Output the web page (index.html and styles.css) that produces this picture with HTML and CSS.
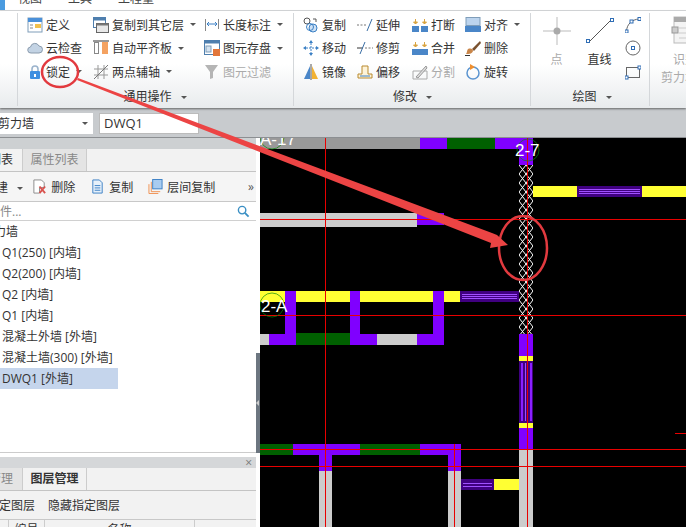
FILE: index.html
```html
<!DOCTYPE html>
<html lang="zh-CN">
<head>
    <meta charset="UTF-8">
    <meta name="viewport" content="width=device-width, initial-scale=1.0">
    <title>剪力墙</title>
    <link rel="stylesheet" href="styles.css">
</head>
<body>

    <!-- Menu tabs, cut off at the top -->
    <div class="menu">
        <span class="menu-active"></span>
        <span class="menu-item">视图</span>
        <span class="menu-item">工具</span>
        <span class="menu-item">工程量</span>
    </div>

    <div class="ribbon">
        <div class="group group-cut">
            <div class="group-body"></div>
        </div>

        <div class="group group-common">
            <div class="group-body">
                <div class="col col-a">
                    <div class="item">
                        <svg class="ico" viewBox="0 0 16 16"><rect x="1" y="1" width="14" height="14" fill="#fff" stroke="#7f9db9"/><rect x="1" y="1" width="14" height="4" fill="#4a90d9"/><rect x="8" y="7" width="6" height="4" fill="#f2c14e"/><path d="M3 8h3M3 11h3" stroke="#888"/></svg>
                        <span>定义</span>
                    </div>
                    <div class="item">
                        <svg class="ico" viewBox="0 0 16 16"><path d="M4 13a3 3 0 0 1-.5-6A4.500 4.500 0 0 1 12 6a3.500 3.500 0 0 1 0 7z" fill="#c3d3e4" stroke="#8a9bad"/></svg>
                        <span>云检查</span>
                    </div>
                    <div class="item">
                        <svg class="ico" viewBox="0 0 16 16"><path d="M5 8V5a3 3 0 0 1 6 0v3" fill="none" stroke="#9bb3cc" stroke-width="1.600"/><rect x="3" y="7" width="10" height="8" rx="1" fill="#3f8fe0"/><rect x="7" y="10" width="2" height="3" fill="#fff"/></svg>
                        <span>锁定</span>
                        <i class="caret"></i>
                    </div>
                </div>
                <div class="col col-b">
                    <div class="item">
                        <svg class="ico" viewBox="0 0 16 16"><rect x="0.500" y="0.500" width="12" height="10" fill="#fff" stroke="#4f7fae"/><rect x="0.500" y="0.500" width="12" height="3" fill="#4f7fae"/><rect x="3.500" y="6.500" width="12" height="9" fill="#e8e8e8" stroke="#666"/><rect x="3.500" y="6.500" width="12" height="2" fill="#777"/></svg>
                        <span>复制到其它层</span>
                        <i class="caret"></i>
                    </div>
                    <div class="item">
                        <svg class="ico" viewBox="0 0 16 16"><path d="M0 1h16" stroke="#333"/><rect x="1.500" y="2.500" width="4" height="11" fill="#fff" stroke="#888"/><rect x="9" y="2" width="6" height="12" fill="#f4a261"/></svg>
                        <span>自动平齐板</span>
                        <i class="caret"></i>
                    </div>
                    <div class="item">
                        <svg class="ico" viewBox="0 0 16 16"><path d="M5 1v14M11 1v14M1 5h14M1 11h14" stroke="#999"/><path d="M1 15L15 1" stroke="#777"/></svg>
                        <span>两点辅轴</span>
                        <i class="caret"></i>
                    </div>
                </div>
                <div class="col">
                    <div class="item">
                        <svg class="ico" viewBox="0 0 16 16"><path d="M1.500 2v12M14.500 2v10" stroke="#888"/><path d="M3 7h10M3 7l2-2M3 7l2 2M13 7l-2-2M13 7l-2 2" stroke="#3a7fc4" fill="none"/></svg>
                        <span>长度标注</span>
                        <i class="caret"></i>
                    </div>
                    <div class="item">
                        <svg class="ico" viewBox="0 0 16 16"><rect x="0.500" y="0.500" width="15" height="14" fill="#fff" stroke="#4f7fae"/><rect x="0.500" y="0.500" width="15" height="3" fill="#4f7fae"/><rect x="2" y="6" width="5" height="6" fill="#d5e3f0" stroke="#7f9db9"/><rect x="9" y="9" width="7" height="7" fill="#e2763a"/></svg>
                        <span>图元存盘</span>
                        <i class="caret"></i>
                    </div>
                    <div class="item item-off">
                        <svg class="ico" viewBox="0 0 16 16"><path d="M1 1h13L9 8v6l-3 1V8z" fill="#b5b5b5"/></svg>
                        <span>图元过滤</span>
                    </div>
                </div>
            </div>
            <div class="group-label">通用操作 <i class="caret"></i></div>
        </div>

        <div class="group group-edit">
            <div class="group-body">
                <div class="col col-c">
                    <div class="item">
                        <svg class="ico" viewBox="0 0 16 16"><circle cx="4" cy="4" r="3" fill="#fff" stroke="#555"/><circle cx="10" cy="11" r="4" fill="#cfe2f5" stroke="#3a7fc4"/><circle cx="7" cy="10" r="3.500" fill="none" stroke="#3a7fc4"/><path d="M10 2h3v3" fill="none" stroke="#555"/></svg>
                        <span>复制</span>
                    </div>
                    <div class="item">
                        <svg class="ico" viewBox="0 0 16 16"><path d="M8 0l2 3H6zM8 16l-2-3h4zM0 8l3-2v4zM16 8l-3 2V6z" fill="#3a7fc4"/><path d="M8 3v10M3 8h10" stroke="#3a7fc4" stroke-dasharray="2 1"/></svg>
                        <span>移动</span>
                    </div>
                    <div class="item">
                        <svg class="ico" viewBox="0 0 16 16"><path d="M7 2v13H1z" fill="#4a86c8"/><path d="M8 0v16" stroke="#555"/><path d="M9 2v13h6z" fill="#f2b233"/></svg>
                        <span>镜像</span>
                    </div>
                </div>
                <div class="col col-d">
                    <div class="item">
                        <svg class="ico" viewBox="0 0 16 16"><path d="M0 8h9" stroke="#777" stroke-dasharray="2 1.500"/><path d="M10 14L15 2" stroke="#3a6ea5"/></svg>
                        <span>延伸</span>
                    </div>
                    <div class="item">
                        <svg class="ico" viewBox="0 0 16 16"><path d="M0 8h6" stroke="#333"/><path d="M8 8h8" stroke="#777" stroke-dasharray="2 1.500"/><path d="M3 14L8 2" stroke="#3a6ea5"/></svg>
                        <span>修剪</span>
                    </div>
                    <div class="item">
                        <svg class="ico" viewBox="0 0 16 16"><path d="M1 14v-4h4V2h6v8h4v4z" fill="#fdf3d8" stroke="#b98a2f"/><path d="M3 12h10" stroke="#3a7fc4"/></svg>
                        <span>偏移</span>
                    </div>
                </div>
                <div class="col col-e">
                    <div class="item">
                        <svg class="ico" viewBox="0 0 16 16"><rect x="0" y="9" width="7" height="6" fill="#4a86c8"/><rect x="9" y="9" width="7" height="6" fill="#4a86c8"/><path d="M3.500 2v5M1.500 5h4l-2 2zM12.500 2v5M10.500 5h4l-2 2z" fill="#d9a441" stroke="#d9a441"/></svg>
                        <span>打断</span>
                    </div>
                    <div class="item">
                        <svg class="ico" viewBox="0 0 16 16"><rect x="0" y="9" width="16" height="6" fill="#4a86c8"/><path d="M3.500 2v5M1.500 5h4l-2 2zM12.500 2v5M10.500 5h4l-2 2z" fill="#d9a441" stroke="#d9a441"/></svg>
                        <span>合并</span>
                    </div>
                    <div class="item item-off">
                        <svg class="ico" viewBox="0 0 16 16"><path d="M1 7h14v8H1z" fill="none" stroke="#aaa"/><path d="M4 13L14 2l1 2L6 14z" fill="#ddd" stroke="#999"/></svg>
                        <span>分割</span>
                    </div>
                </div>
                <div class="col">
                    <div class="item">
                        <svg class="ico" viewBox="0 0 16 16"><rect x="1" y="0.500" width="14" height="8" fill="#bcd4ee" stroke="#7f9db9"/><rect x="0" y="9" width="16" height="6" fill="#4a86c8"/></svg>
                        <span>对齐</span>
                        <i class="caret"></i>
                    </div>
                    <div class="item">
                        <svg class="ico" viewBox="0 0 16 16"><path d="M15 1L7 9l2 2 7-8z" fill="#7a5230"/><path d="M3 9c3-1 5 0 5 2-1 3-4 3-7 3 1-1 1-4 2-5z" fill="#c9864a"/><path d="M0 15.500h5" stroke="#333"/></svg>
                        <span>删除</span>
                    </div>
                    <div class="item">
                        <svg class="ico" viewBox="0 0 16 16"><circle cx="8" cy="9" r="6" fill="none" stroke="#5a94d0" stroke-width="1.500"/><path d="M5 0l5 3-5 3z" fill="#ef8f2f"/></svg>
                        <span>旋转</span>
                    </div>
                </div>
            </div>
            <div class="group-label">修改 <i class="caret"></i></div>
        </div>

        <div class="group group-draw">
            <div class="group-body">
                <div class="big big-off">
                    <svg class="big-ico" viewBox="0 0 30 30"><path d="M15 1v28M1 15h28" stroke="#bbb"/><circle cx="15" cy="15" r="3.500" fill="#aaa"/></svg>
                    <span>点</span>
                </div>
                <div class="big">
                    <svg class="big-ico" viewBox="0 0 30 30"><path d="M4 26L26 4" stroke="#555"/><rect x="1.500" y="23.500" width="3" height="3" fill="#fff" stroke="#2f6db5"/><rect x="25.500" y="2.500" width="3" height="3" fill="#fff" stroke="#2f6db5"/></svg>
                    <span>直线</span>
                </div>
                <div class="col">
                    <div class="item">
                        <svg class="ico" viewBox="0 0 16 16"><path d="M1.500 14C2 7 7 2.500 14 2" fill="none" stroke="#666"/><rect x="0" y="13" width="3" height="3" fill="#fff" stroke="#2f6db5"/><rect x="5" y="3" width="3" height="3" fill="#fff" stroke="#2f6db5"/><rect x="13" y="0.500" width="3" height="3" fill="#fff" stroke="#2f6db5"/></svg>
                    </div>
                    <div class="item">
                        <svg class="ico" viewBox="0 0 16 16"><circle cx="8" cy="8" r="7" fill="none" stroke="#666"/><rect x="6.500" y="6.500" width="3" height="3" fill="#fff" stroke="#2f6db5"/></svg>
                    </div>
                    <div class="item">
                        <svg class="ico" viewBox="0 0 16 16"><rect x="1.500" y="3.500" width="13" height="10" fill="none" stroke="#666"/><rect x="0" y="12" width="3" height="3" fill="#fff" stroke="#2f6db5"/><rect x="13" y="2" width="3" height="3" fill="#fff" stroke="#2f6db5"/></svg>
                    </div>
                </div>
            </div>
            <div class="group-label">绘图 <i class="caret"></i></div>
        </div>

        <div class="group group-id">
            <div class="group-body">
                <div class="big big-off">
                    <svg class="big-ico" viewBox="0 0 30 30"><rect x="4" y="1" width="26" height="26" fill="#f4f4f4" stroke="#bbb"/><rect x="4" y="1" width="26" height="5" fill="#aaa"/><rect x="2" y="11" width="6" height="6" fill="#ccc" stroke="#999"/><path d="M9 12h20M9 17h20M9 22h20" stroke="#ccc"/></svg>
                    <span>识别</span>
                    <span class="big-second">剪力墙</span>
                </div>
            </div>
        </div>
    </div>

    <div class="selectors">
        <div class="select"><span class="select-text">剪力墙</span><i class="caret"></i></div>
        <div class="input">DWQ1</div>
    </div>

    <div class="main">
        <div class="side">
            <div class="side-strip"></div>
            <div class="tabs">
                <div class="tab tab-on tab-cut">列表</div>
                <div class="tab">属性列表</div>
            </div>
            <div class="tools">
                <span class="tool tool-new">新建 <i class="caret"></i></span>
                <span class="tool">
                    <svg class="ico" viewBox="0 0 16 16"><path d="M2 1h8l3 3v5H8v6H2z" fill="#fff" stroke="#8a8a8a"/><path d="M8 8l6 7M14 8l-6 7" stroke="#d9534f" stroke-width="2"/></svg>
                    删除
                </span>
                <span class="tool">
                    <svg class="ico" viewBox="0 0 16 16"><path d="M3 1h7l3 3v11H3z" fill="#e6f0fa" stroke="#3a7fc4"/><path d="M5 7h6M5 9.500h6M5 12h6" stroke="#3a7fc4"/></svg>
                    复制
                </span>
                <span class="tool">
                    <svg class="ico" viewBox="0 0 16 16"><rect x="5" y="0.500" width="10" height="10" fill="#a9ccf0" stroke="#3a7fc4"/><path d="M3.500 3v10.500H13M1 5.500v10h10" fill="none" stroke="#ef8f4f"/></svg>
                    层间复制
                </span>
                <span class="tools-more">»</span>
            </div>
            <div class="search">
                <span class="search-text">构件...</span>
                <svg class="search-ico" viewBox="0 0 14 14"><circle cx="5.500" cy="5.500" r="4" fill="none" stroke="#3a8fc4" stroke-width="1.500"/><path d="M8.500 8.500l4 4" stroke="#3a8fc4" stroke-width="2"/></svg>
            </div>
            <ul class="tree">
                <li class="tree-root">剪力墙</li>
                <li>Q1(250) [内墙]</li>
                <li>Q2(200) [内墙]</li>
                <li>Q2 [内墙]</li>
                <li>Q1 [内墙]</li>
                <li>混凝土外墙 [外墙]</li>
                <li>混凝土墙(300) [外墙]</li>
                <li class="tree-on">DWQ1 [外墙]</li>
            </ul>

            <div class="layer">
                <div class="layer-head">×</div>
                <div class="tabs layer-tabs">
                    <div class="tab tab-cut">管理</div>
                    <div class="tab tab-on tab-bold">图层管理</div>
                </div>
                <div class="layer-tools">
                    <span class="layer-show">显示指定图层</span>
                    <span>隐藏指定图层</span>
                </div>
                <div class="layer-table">
                    <span class="cell cell-a"></span>
                    <span class="cell cell-b">编号</span>
                    <span class="cell cell-c">名称</span>
                </div>
            </div>
        </div>

        <div class="splitter"><span class="splitter-bar"><i></i></span></div>

        <svg class="cad" viewBox="260 138 426 389" shape-rendering="crispEdges">
            <defs>
                <pattern id="zig" x="519" y="165" width="7" height="9" patternUnits="userSpaceOnUse">
                    <path d="M0 0L7 9M7 0L0 9" stroke="#fff" fill="none" shape-rendering="auto"/>
                </pattern>
            </defs>

            <!-- top wall -->
            <rect class="c-grey2" x="260" y="138" width="160" height="11"/>
            <rect class="c-purple" x="420" y="138" width="27" height="11"/>
            <rect class="c-green" x="447" y="138" width="48" height="11"/>
            <rect class="c-purple" x="495" y="138" width="38" height="11"/>
            <rect class="c-purple" x="519" y="149" width="14" height="16"/>

            <!-- zigzag column -->
            <rect fill="url(#zig)" x="519" y="165" width="14" height="169"/>

            <!-- right wall -->
            <rect class="c-yellow" x="533" y="186" width="153" height="11"/>
            <rect class="c-deep" x="577" y="186" width="65" height="11"/>
            <path class="hatch" d="M579 189.500H640M579 191.500H640M579 193.500H640"/>

            <!-- grey wall -->
            <rect class="c-grey" x="260" y="213" width="157" height="14"/>
            <rect class="c-purple" x="417" y="213" width="27" height="12"/>

            <!-- middle wall -->
            <rect class="c-yellow" x="260" y="291" width="200" height="11"/>
            <rect class="c-deep" x="460" y="291" width="59" height="11"/>
            <path class="hatch" d="M462 294.500H517M462 296.500H517M462 298.500H517"/>
            <rect class="c-purple" x="285" y="291" width="11" height="43"/>
            <rect class="c-purple" x="350" y="291" width="10" height="43"/>
            <rect class="c-purple" x="433" y="291" width="11" height="43"/>
            <rect class="c-grey" x="260" y="334" width="9" height="11"/>
            <rect class="c-purple" x="269" y="334" width="27" height="11"/>
            <rect class="c-green" x="296" y="333" width="54" height="12"/>
            <rect class="c-purple" x="350" y="334" width="27" height="11"/>
            <rect class="c-grey" x="377" y="334" width="40" height="11"/>
            <rect class="c-purple" x="417" y="334" width="27" height="11"/>

            <!-- column below zigzag -->
            <rect class="c-purple" x="519" y="334" width="14" height="22"/>
            <rect class="c-yellow" x="519" y="356" width="14" height="5"/>
            <rect class="c-deep" x="519" y="361" width="14" height="62"/>
            <path class="hatch-wide" d="M522 363V421M531 363V421"/>
            <path class="hatch" d="M525.500 363V421"/>
            <rect class="c-yellow" x="519" y="423" width="14" height="5"/>
            <rect class="c-purple" x="519" y="428" width="14" height="21"/>
            <rect class="c-grey" x="519" y="449" width="14" height="78"/>

            <!-- bottom wall -->
            <rect class="c-green" x="260" y="444" width="33" height="11"/>
            <rect class="c-purple" x="293" y="444" width="67" height="11"/>
            <rect class="c-green" x="360" y="444" width="60" height="11"/>
            <rect class="c-purple" x="420" y="444" width="41" height="11"/>
            <rect class="c-purple" x="319" y="455" width="13" height="16"/>
            <rect class="c-grey" x="319" y="471" width="13" height="56"/>
            <rect class="c-purple" x="448" y="455" width="13" height="16"/>
            <rect class="c-grey" x="448" y="471" width="13" height="56"/>
            <rect class="c-deep" x="461" y="479" width="33" height="11"/>
            <path class="hatch" d="M463 483.500H492M463 486.500H492"/>
            <rect class="c-yellow" x="494" y="479" width="25" height="11"/>

            <!-- axis lines -->
            <path class="axis" d="M325.500 138V527M527.500 138V527M454.500 444V527M260 219.500H686M260 315.500H686M260 449.500H686M260 466.500H686M675 433.500H686"/>

            <!-- axis labels -->
            <g shape-rendering="auto">
                <circle class="bubble" cx="272" cy="305" r="12"/>
                <circle class="bubble" cx="272" cy="137" r="12"/>
                <circle class="bubble" cx="528" cy="150" r="11"/>
                <text class="axis-text" x="260" y="145">A-17</text>
                <text class="axis-text" x="515" y="156">2-7</text>
                <text class="axis-text" x="261" y="312">2-A</text>
            </g>
        </svg>
    </div>

    <!-- Red marks drawn over the screenshot -->
    <svg class="marks" viewBox="0 0 686 527">
        <ellipse class="mark" cx="60" cy="72" rx="18" ry="15"/>
        <ellipse class="mark" cx="523" cy="248" rx="24" ry="32"/>
        <path class="mark-arrow" d="M78 78L492 233L497 235L508 245L490 248L491 243L77 80z"/>
    </svg>

</body>
</html>
```

FILE: styles.css
```css
html, body {
    margin: 0;
    height: 100%;
}

body {
    width: 686px;
    height: 527px;
    overflow: hidden;
    position: relative;
    display: flex;
    flex-direction: column;
    font-family: "Open Sans", "Noto Sans CJK SC", sans-serif;
    font-size: 12px;
    color: #333;
    background: #fff;
}

/* Menu tabs */
.menu {
    height: 10px;
    flex: none;
    display: flex;
    overflow: hidden;
    background: #fff;
    border-bottom: 1px solid #d8dadc;
}

.menu-active {
    width: 5px;
    margin-right: 13px;
    background: #4a9be0;
}

.menu-item {
    margin-right: 26px;
    font-size: 12px;
    line-height: 12px;
    margin-top: -7px;
    color: #444;
}

/* Ribbon */
.ribbon {
    height: 97px;
    flex: none;
    display: flex;
    background: linear-gradient(#fff 55%, #e8ebed);
    box-shadow: 0 1px 2px rgba(0, 0, 0, 0.5);
    position: relative;
}

.group {
    display: flex;
    flex-direction: column;
    border-right: 1px solid #d4d7da;
    margin: 2px 0;
    box-sizing: border-box;
}

.group-cut {
    width: 18px;
}

.group-common {
    width: 276px;
    padding-left: 9px;
}

.group-common .group-label {
    padding-right: 10px;
}

.group-edit {
    width: 237px;
    padding-left: 9px;
}

.group-edit .group-label {
    padding-right: 8px;
}

.group-draw {
    width: 119px;
    padding-left: 4px;
}

.group-id {
    flex: 1;
    border-right: none;
    overflow: hidden;
    padding-left: 20px;
}

.group-body {
    flex: 1;
    display: flex;
}

.group-label {
    height: 19px;
    line-height: 19px;
    text-align: center;
    white-space: nowrap;
}

.col {
    display: flex;
    flex-direction: column;
}

.col-a {
    width: 66px;
}

.col-b {
    width: 111px;
}

.col-c {
    width: 54px;
}

.col-d {
    width: 55px;
}

.col-e {
    width: 53px;
}

.item {
    height: 23.5px;
    display: flex;
    align-items: center;
    white-space: nowrap;
}

.item-off {
    color: #aaa;
}

.ico {
    width: 16px;
    height: 16px;
    flex: none;
    margin-right: 3px;
}

.caret {
    display: inline-block;
    width: 0;
    height: 0;
    margin-left: 6px;
    border-left: 3px solid transparent;
    border-right: 3px solid transparent;
    border-top: 3px solid #555;
    vertical-align: middle;
}

/* Big buttons */
.big {
    width: 43px;
    display: flex;
    flex-direction: column;
    align-items: center;
    white-space: nowrap;
}

.big span {
    line-height: 18px;
    margin-top: 5px;
}

.big-off {
    color: #aaa;
}

.big .big-second {
    margin-top: 0;
    margin-right: 12px;
}

.big-ico {
    width: 30px;
    height: 30px;
    margin-top: 3px;
}

.group-draw .col {
    margin-left: 4px;
}

.group-id .big {
    width: 30px;
}

/* Selector bar */
.selectors {
    height: 29px;
    flex: none;
    display: flex;
    align-items: center;
    box-sizing: border-box;
    padding-top: 1px;
    background: #c8cbce;
}

.select {
    width: 93px;
    height: 21px;
    line-height: 21px;
    margin-right: 6px;
    background: #fff;
    box-sizing: border-box;
    display: flex;
    justify-content: space-between;
    align-items: center;
    padding-right: 5px;
}

.select-text {
    margin-left: -2px;
}

.input {
    width: 100px;
    height: 21px;
    line-height: 19px;
    padding-left: 4px;
    background: #fff;
    box-sizing: border-box;
    border: 1px solid #bbb;
    font-size: 13px;
}

/* Main area */
.main {
    flex: 1;
    min-height: 0;
    display: flex;
    border-top: 1px solid #8c8f92;
}

.side {
    width: 256px;
    flex: none;
    display: flex;
    flex-direction: column;
    background: #fff;
    overflow: hidden;
}

.side-strip {
    height: 11px;
    flex: none;
    background: #cdd0d2;
}

.tabs {
    height: 22px;
    flex: none;
    display: flex;
    background: #f2f2f2;
    border-bottom: 1px solid #c4c4c4;
}

.tab {
    width: 64px;
    line-height: 22px;
    text-align: center;
    background: #e4e4e4;
    border-right: 1px solid #ccc;
    color: #888;
    box-sizing: border-box;
}

.tab-on {
    background: #f2f2f2;
    color: #333;
}

.tab-cut {
    width: 23px;
    text-indent: -11px;
    white-space: nowrap;
    overflow: hidden;
    text-align: left;
}

.tab-bold {
    font-weight: bold;
}

.tools {
    height: 29px;
    flex: none;
    display: flex;
    align-items: center;
    background: #f5f5f5;
    border-bottom: 1px solid #c8c8c8;
    white-space: nowrap;
}

.tool {
    display: flex;
    align-items: center;
    gap: 4px;
    margin-right: 15px;
}

.tool .ico {
    width: 15px;
    height: 15px;
    margin-right: 0;
}

.tool-new {
    display: block;
    margin-left: -16px;
    margin-right: 9px;
}

.tools-more {
    margin-left: auto;
    margin-right: 2px;
    color: #555;
}

.search {
    height: 18px;
    flex: none;
    display: flex;
    align-items: center;
    justify-content: space-between;
    padding-right: 6px;
    border-bottom: 1px solid #d0d0d0;
    color: #888;
}

.search-text {
    margin-left: -12px;
}

.search-ico {
    width: 13px;
    height: 13px;
}

.tree {
    list-style: none;
    margin: 0;
    padding: 0;
    flex: 1;
    min-height: 0;
}

.tree li {
    height: 21px;
    line-height: 21px;
    padding-left: 2px;
    width: 116px;
    white-space: nowrap;
}

.tree-root {
    text-indent: -20px;
}

.tree .tree-on {
    background: #c5d5ec;
}

/* Layer panel */
.layer {
    height: 75px;
    flex: none;
    box-sizing: border-box;
    background: #f2f2f2;
    border-top: 1px solid #ccc;
    padding-top: 4px;
    background-clip: content-box;
}

.layer-head {
    height: 11px;
    line-height: 11px;
    padding-right: 4px;
    text-align: right;
    color: #777;
    background: #d5d7d9;
}

.layer-tools {
    height: 28px;
    display: flex;
    align-items: center;
    border-bottom: 1px solid #c8c8c8;
    white-space: nowrap;
}

.layer-show {
    margin-left: -37px;
    margin-right: 13px;
}

.layer-table {
    height: 20px;
    display: flex;
}

.cell {
    box-sizing: border-box;
    border-right: 1px solid #ccc;
    text-align: center;
    line-height: 20px;
}

.cell-a {
    width: 9px;
}

.cell-b {
    width: 36px;
}

.cell-c {
    width: 150px;
}

/* Splitter */
.splitter {
    width: 4px;
    flex: none;
    background: #fff;
    position: relative;
}

.splitter-bar {
    position: absolute;
    left: 0;
    top: 215px;
    width: 4px;
    height: 100px;
    background: #6c7680;
}

.splitter-bar i {
    position: absolute;
    left: 0;
    top: 47px;
    border-top: 3px solid transparent;
    border-bottom: 3px solid transparent;
    border-right: 3px solid #ccc;
}

/* CAD canvas */
.cad {
    width: 426px;
    height: 389px;
    flex: none;
    background: #000;
}

.c-purple {
    fill: #8000ff;
}

.c-deep {
    fill: #400080;
}

.c-green {
    fill: #006000;
}

.c-yellow {
    fill: #ffff33;
}

.c-grey {
    fill: #cccccc;
}

.c-grey2 {
    fill: #999999;
}

.hatch {
    stroke: #a050ff;
    fill: none;
}

.hatch-wide {
    stroke: #8a20ff;
    stroke-width: 2;
    fill: none;
}

.axis {
    stroke: #e80000;
    fill: none;
}

.bubble {
    fill: none;
    stroke: #0a8a0a;
    stroke-width: 0.7;
}

.axis-text {
    fill: #fff;
    font-family: "Liberation Sans", sans-serif;
    font-size: 17px;
}

/* Red annotation */
.marks {
    position: absolute;
    left: 0;
    top: 0;
    width: 686px;
    height: 527px;
    pointer-events: none;
}

.mark {
    fill: none;
    stroke: #e23a3f;
    stroke-width: 2.5;
}

.mark-arrow {
    fill: #ec4444;
}
```
